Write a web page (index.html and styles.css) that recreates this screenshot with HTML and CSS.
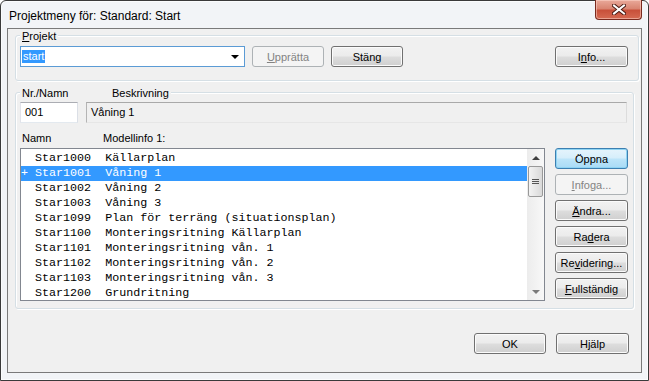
FILE: index.html
```html
<!DOCTYPE html>
<html lang="sv">
<head>
    <meta charset="UTF-8">
    <meta name="viewport" content="width=device-width, initial-scale=1.0">
    <title>Projektmeny</title>
    <link rel="stylesheet" href="styles.css">
</head>
<body>
    <div class="window">
        <div class="titlebar">
            <span class="title">Projektmeny för: Standard: Start</span>
            <button class="close" type="button">
                <svg width="14" height="11" viewBox="0 0 14 11">
                    <path d="M2 1.5 L12 9.5 M12 1.5 L2 9.5" stroke="#4a1a12" stroke-width="4" stroke-linecap="square"/>
                    <path d="M2 1.5 L12 9.5 M12 1.5 L2 9.5" stroke="#fff" stroke-width="2" stroke-linecap="square"/>
                </svg>
            </button>
        </div>
        <div class="client">
            <div class="group group-project">
                <div class="group-title"><span><u>P</u>rojekt</span></div>
                <div class="row">
                    <div class="combo">
                        <span class="sel">start</span>
                        <span class="arrow"></span>
                    </div>
                    <button class="btn disabled" type="button"><u>U</u>pprätta</button>
                    <button class="btn" type="button">Stäng</button>
                    <button class="btn btn-info" type="button">I<u>n</u>fo...</button>
                </div>
            </div>

            <div class="group group-drawing">
                <div class="group-title">
                    <span class="col-nr">Nr./Namn</span>
                    <span>Beskrivning</span>
                </div>
                <div class="row fields">
                    <div class="field field-nr">001</div>
                    <div class="field field-desc">Våning 1</div>
                </div>
                <div class="col-labels">
                    <span class="col-name">Namn</span>
                    <span>Modellinfo 1:</span>
                </div>
                <div class="row list-row">
                    <div class="list">
                        <div class="rows">
                            <div class="item">  Star1000  Källarplan</div>
                            <div class="item selected">+ Star1001  Våning 1</div>
                            <div class="item">  Star1002  Våning 2</div>
                            <div class="item">  Star1003  Våning 3</div>
                            <div class="item">  Star1099  Plan för terräng (situationsplan)</div>
                            <div class="item">  Star1100  Monteringsritning Källarplan</div>
                            <div class="item">  Star1101  Monteringsritning vån. 1</div>
                            <div class="item">  Star1102  Monteringsritning vån. 2</div>
                            <div class="item">  Star1103  Monteringsritning vån. 3</div>
                            <div class="item">  Star1200  Grundritning</div>
                        </div>
                        <div class="scrollbar">
                            <div class="sb-btn"><span class="tri-up"></span></div>
                            <div class="thumb"><span></span><span></span><span></span></div>
                            <div class="track"></div>
                            <div class="sb-btn"><span class="tri-down"></span></div>
                        </div>
                    </div>
                    <div class="side-buttons">
                        <button class="btn default" type="button">Öppna</button>
                        <button class="btn disabled" type="button"><u>I</u>nfoga...</button>
                        <button class="btn" type="button"><u>Ä</u>ndra...</button>
                        <button class="btn" type="button">Ra<u>d</u>era</button>
                        <button class="btn" type="button">Re<u>v</u>idering...</button>
                        <button class="btn" type="button"><u>F</u>ullständig</button>
                    </div>
                </div>
            </div>

            <div class="dialog-buttons">
                <button class="btn btn-ok" type="button">OK</button>
                <button class="btn" type="button">Hjälp</button>
            </div>
        </div>
    </div>
</body>
</html>
```

FILE: styles.css
```css
body {
    margin: 0;
    padding: 0;
    background-color: #fff;
    font-family: "Liberation Sans", Arial, sans-serif;
    font-size: 11px;
    color: #000;
}
.window {
    width: 649px;
    height: 381px;
    box-sizing: border-box;
    border: 1px solid #3a3a3a;
    border-radius: 6px 6px 0 0;
    background-color: #f2f4f7;
    box-shadow: inset 0 0 0 1px #fbfcfd;
    padding: 0 6px 7px 6px;
    display: flex;
    flex-direction: column;
}
.titlebar {
    height: 27px;
    display: flex;
    align-items: flex-start;
}
.title {
    font-size: 12px;
    padding: 8px 0 0 2px;
    color: #000;
}
.close {
    margin: -1px 0 0 auto;
    width: 47px;
    height: 20px;
    padding: 0;
    border: 1px solid #7a2a1e;
    border-top: none;
    border-radius: 0 0 4px 4px;
    background: linear-gradient(#e9a99a 0%, #d98572 45%, #c8503a 55%, #d56a52 100%);
    box-shadow: inset 0 0 0 1px rgba(255, 220, 210, 0.5);
    display: flex;
    align-items: center;
    justify-content: center;
}
.client {
    flex: 1;
    border: 1px solid #7a7a7a;
    background-color: #f0f0f0;
    padding: 6px 0 0 7px;
}
.group {
    box-sizing: border-box;
    border: 1px solid #d5dfe5;
    border-radius: 3px;
    box-shadow: inset 1px 1px #fff, 1px 1px #fff;
}
.group-title {
    display: flex;
    width: fit-content;
    margin-top: -7px;
    padding: 0 2px;
    line-height: 14px;
    background-color: #f0f0f0;
}
.group-project {
    width: 624px;
    height: 46px;
    padding: 0 10px 0 4px;
}
.row {
    display: flex;
    align-items: center;
    margin-top: 3px;
}
.combo {
    width: 225px;
    height: 21px;
    box-sizing: border-box;
    border: 1px solid #5b9bd5;
    background-color: #fff;
    display: flex;
    align-items: center;
    padding-left: 1px;
}
.sel {
    background-color: #3399ff;
    color: #fff;
    line-height: 13px;
    padding: 0 1px;
}
.arrow {
    margin: 0 5px 0 auto;
    width: 0;
    height: 0;
    border-left: 4px solid transparent;
    border-right: 4px solid transparent;
    border-top: 4px solid #000;
}
.btn {
    height: 21px;
    width: 72px;
    box-sizing: border-box;
    padding: 0;
    border: 1px solid #707070;
    border-radius: 3px;
    background: linear-gradient(#f2f2f2 0%, #ebebeb 48%, #dddddd 52%, #cfcfcf 100%);
    box-shadow: inset 0 0 0 1px #fbfbfb;
    font-family: "Liberation Sans", Arial, sans-serif;
    font-size: 11px;
    color: #000;
    cursor: pointer;
}
.row .btn {
    margin-left: 7px;
}
.row .btn-info {
    margin-left: auto;
    width: 73px;
}
.btn.disabled {
    border-color: #adb2b5;
    background: #f4f4f4;
    box-shadow: none;
    color: #838383;
}
.btn.default {
    border-color: #3c7fb1;
    background: linear-gradient(#e5f4fc 0%, #d6eefb 48%, #bde5f9 52%, #a9dbf6 100%);
    box-shadow: inset 0 0 0 1px #8fd4f3;
}
.group-drawing {
    width: 619px;
    height: 217px;
    margin-top: 11px;
    padding: 0 5px 0 4px;
}
.col-nr {
    width: 90px;
}
.fields {
    margin-top: 2px;
}
.field {
    height: 21px;
    box-sizing: border-box;
    border: 1px solid;
    border-color: #abadb3 #dbdfe6 #e3e9ef #e2e3ea;
    line-height: 19px;
    padding-left: 4px;
}
.field-nr {
    width: 58px;
    background-color: #fff;
}
.field-desc {
    width: 541px;
    margin-left: 8px;
    background-color: #f0f0f0;
    border-color: #a9a9a9 #dcdcdc #e6e6e6 #b4b4b4;
}
.col-labels {
    display: flex;
    margin-top: 8px;
    padding-left: 2px;
    line-height: 14px;
}
.col-name {
    width: 81px;
}
.list-row {
    margin-top: 3px;
    align-items: flex-start;
}
.list {
    width: 525px;
    height: 153px;
    box-sizing: border-box;
    border: 1px solid #828790;
    background-color: #fff;
    display: flex;
    overflow: hidden;
}
.rows {
    flex: 1;
    padding-top: 2px;
    font-family: "Liberation Mono", "Courier New", monospace;
    font-size: 11.7px;
}
.item {
    height: 15px;
    line-height: 15px;
    white-space: pre;
    color: #000;
}
.item.selected {
    background-color: #3399ff;
    color: #fff;
}
.scrollbar {
    width: 17px;
    background: linear-gradient(90deg, #ececec, #f8f8f8);
    display: flex;
    flex-direction: column;
}
.sb-btn {
    height: 17px;
    display: flex;
    align-items: center;
    justify-content: center;
}
.tri-up {
    border-left: 4px solid transparent;
    border-right: 4px solid transparent;
    border-bottom: 4px solid #404040;
}
.tri-down {
    border-left: 4px solid transparent;
    border-right: 4px solid transparent;
    border-top: 4px solid #7a7a7a;
}
.thumb {
    height: 29px;
    margin: 0 1px;
    border: 1px solid #999;
    border-radius: 2px;
    background: linear-gradient(90deg, #f3f3f3, #e6e6e6 50%, #d9d9d9);
    display: flex;
    flex-direction: column;
    align-items: center;
    justify-content: center;
    gap: 1px;
}
.thumb span {
    width: 7px;
    height: 1px;
    background-color: #555;
}
.track {
    flex: 1;
}
.side-buttons {
    margin-left: auto;
    display: flex;
    flex-direction: column;
    gap: 5px;
}
.side-buttons .btn {
    width: 73px;
}
.dialog-buttons {
    display: flex;
    justify-content: flex-end;
    gap: 10px;
    margin-top: 24px;
    padding-right: 12px;
}
.dialog-buttons .btn {
    width: 73px;
}
.dialog-buttons .btn-ok {
    width: 72px;
}
```
